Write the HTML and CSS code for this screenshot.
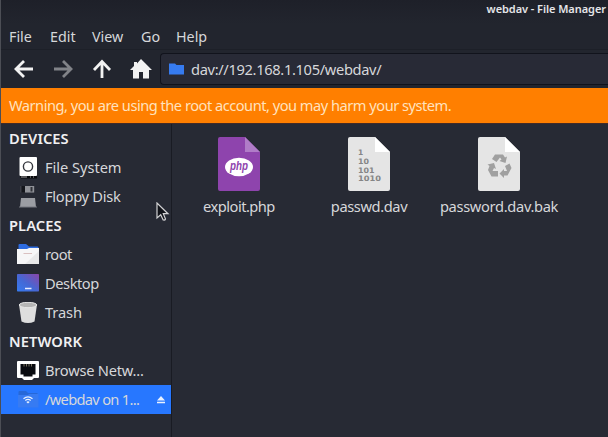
FILE: index.html
```html
<!DOCTYPE html>
<html lang="en">
<head>
<meta charset="utf-8">
<title>webdav - File Manager</title>
<link rel="stylesheet" href="styles.css">
</head>
<body>
<div class="window">
  <header class="titlebar">webdav - File Manager</header>
  <nav class="menubar"><span class="m-file">File</span><span class="m-edit">Edit</span><span class="m-view">View</span><span class="m-go">Go</span><span>Help</span></nav>
  <div class="toolbar">
    <svg class="tool" viewBox="0 0 20 20"><path class="arrow" d="M19 10H3M10 2L2 10L10 18"/></svg>
    <svg class="tool disabled" viewBox="0 0 20 20"><path class="arrow" d="M1 10H17M10 2L18 10L10 18"/></svg>
    <svg class="tool" viewBox="0 0 20 20"><path class="arrow" d="M10 19V3M2 11L10 2.5L18 11"/></svg>
    <svg class="tool home" viewBox="0 0 22 20"><path fill="#f2f2f2" d="M11 0L22 11H19V19.5H13V13H9V19.5H3V11H0L4 7V3H7V4.500Z"/></svg>
    <div class="path">
      <svg width="15" height="12" viewBox="0 0 15 12"><path fill="#367bf0" d="M0 .5H6L7.500 2H15V11.500H0Z"/></svg>
      <span class="address">dav://192.168.1.105/webdav/</span>
    </div>
  </div>
  <div class="warning"><span>Warning, you are using the root account, you may harm your system.</span></div>
  <div class="content">
    <aside class="sidebar">
      <h2 class="h-dev">DEVICES</h2>
      <div class="row"><svg viewBox="0 0 22 22"><rect x="2.500" y="0" width="17.500" height="19" rx="1" fill="#fff"/><circle cx="11" cy="9.500" r="4.600" fill="none" stroke="#35373e" stroke-width="1.400"/><path d="M3 19H20V21.500H4Z" fill="#08090c"/><path d="M4 20H10M13 20H14M16 20H17" stroke="#aaa"/></svg><span class="t-fs">File System</span></div>
      <div class="row"><svg viewBox="0 0 22 22"><path d="M3 0H18V6.500H3Z" fill="#3a3c45"/><path d="M4.500 0H8V6.500H4.500Z" fill="#14161c"/><path d="M8 0H17V6.500H8Z" fill="#909298"/><path d="M13.500 1H15.500V5.500H13.500Z" fill="#303239"/><path d="M4 12H18L19 21H3Z" fill="#9b9da3"/><path d="M2 20.500H20V21.500H2Z" fill="#777980"/></svg><span class="t-fd">Floppy Disk</span></div>
      <h2 class="h-pl">PLACES</h2>
      <div class="row"><svg viewBox="0 0 22 22"><path d="M1.500 1Q1.500 0 2.500 0H9L12 2.500H20.500Q21.500 2.500 21.500 4V8H1.500Z" fill="#2d6be0"/><path d="M0 5H10L12 4H22V20H0Z" fill="#f6f6f7"/><path d="M22 7V20H8Z" fill="#e8e8e9"/><path d="M6.500 9.500H15" stroke="#d9c0c0"/></svg><span class="t-root">root</span></div>
      <div class="row"><svg viewBox="0 0 22 22"><defs><linearGradient id="desk" x1="0" y1="1" x2="1" y2="0"><stop stop-color="#367bf0"/><stop offset=".45" stop-color="#4568d5"/><stop offset="1" stop-color="#8a46a8"/></linearGradient></defs><rect y="1" width="22" height="17.500" rx=".7" fill="url(#desk)"/><path d="M8 15.500H14.500" stroke="#e6eaff" stroke-width="1.500"/></svg><span class="t-desk">Desktop</span></div>
      <div class="row"><svg viewBox="0 0 22 22"><path d="M2 2.500L4.500 19.500Q11 22.500 17.500 19.500L20 2.500Z" fill="#dedede"/><ellipse cx="11" cy="3" rx="8.700" ry="2.700" fill="#b5b5b5" stroke="#e7e7e7"/></svg><span class="t-trash">Trash</span></div>
      <h2 class="h-net">NETWORK</h2>
      <div class="row"><svg viewBox="0 0 22 22"><path d="M1 1H21Q22 1 22 2V17Q22 18 21 18H17L15 20H7L5 18H1Q0 18 0 17V2Q0 1 1 1Z" fill="#fff"/><path d="M3.500 4H18.500V14.500H15.500V16.500H6.500V14.500H3.500Z" fill="#090b10"/><path d="M7 4V6.500M9.500 4V6.500M12 4V6.500M14.500 4V6.500" stroke="#77715f"/></svg><span class="t-browse">Browse Netw...</span></div>
      <div class="row selected"><svg viewBox="0 0 22 22"><path d="M1.500 3Q1.500 2 2.500 2H9L11 4H20.500V7H1.500Z" fill="#2668d8"/><path d="M1 6H11L12 5H21.500V18.500H1Z" fill="#377bf2"/><g fill="none" stroke="#e9f2ff" stroke-width="1.150"><path d="M6.500 9.700Q11 6 15.500 9.700M8.300 11.500Q11 9.300 13.700 11.500"/></g><path d="M9.300 13Q11 11.700 12.700 13L11 14.500Z" fill="#e9f2ff"/></svg><span class="t-webdav">/webdav on 1...</span><svg class="eject" viewBox="0 0 8 8"><path d="M4 0L8 4.500H0ZM0 5.700H8V7.300H0Z" fill="#e9f1ff"/></svg></div>
    </aside>
    <main class="files">
      <figure class="file-php">
        <svg width="44" height="55" viewBox="0 0 44 55"><path d="M2 0H28L43 15V52Q43 54 41 54H3Q1 54 1 52V2Q1 0 3 0Z" fill="#8e44ad"/><path d="M28 0L43 15H28Z" fill="#b07cc8"/><ellipse cx="22" cy="30" rx="14" ry="9.300" fill="#fff"/><text class="php" x="22" y="33" text-anchor="middle" textLength="18" lengthAdjust="spacingAndGlyphs">php</text></svg>
        <figcaption>exploit.php</figcaption>
      </figure>
      <figure class="file-dav">
        <svg width="44" height="55" viewBox="0 0 44 55"><path d="M3 0H28L43 15V52Q43 54 41 54H3Q1 54 1 52V2Q1 0 3 0Z" fill="#e5e5e5"/><path d="M28 0L43 15H28Z" fill="#fff"/><g class="bits"><text x="11" y="18">1</text><text x="11" y="26.500" textLength="11" lengthAdjust="spacingAndGlyphs">10</text><text x="11" y="35.500" textLength="16.500" lengthAdjust="spacingAndGlyphs">101</text><text x="11" y="44" textLength="23" lengthAdjust="spacingAndGlyphs">1010</text></g></svg>
        <figcaption>passwd.dav</figcaption>
      </figure>
      <figure class="file-bak">
        <svg width="44" height="55" viewBox="0 0 44 55"><path d="M3 0H28L43 15V52Q43 54 41 54H3Q1 54 1 52V2Q1 0 3 0Z" fill="#e5e5e5"/><path d="M28 0L43 15H28Z" fill="#fff"/><g fill="#a0a0a0"><path d="M15 22L18 17.500H26L28 20.500L30 19.500L28.500 26L22.500 24L24.500 22.500L23 20.500L19.500 25Z"/><path d="M10.500 27.500L17 26L19 32L17 31L15.500 34H21V39.500H14.500L11 33L12.500 29Z"/><path d="M28 29L32.500 26.500L34.500 31L30.500 38.500H27V41L22.500 36.500L27 32V34H30Z"/></g></svg>
        <figcaption>password.dav.bak</figcaption>
      </figure>
    </main>
  </div>
  <svg class="cursor" viewBox="0 0 14 20"><path d="M1 1V16L4.700 12.700L7.200 18Q9 18.500 9.500 17L7.300 11.700H12Z" fill="#111319" stroke="#d2d2d4" stroke-width="1.200"/></svg>
</div>
</body>
</html>
```
FILE: styles.css
```css
* { box-sizing: border-box; }
body { margin: 0; background: #272a34; font-family: "Noto Sans", sans-serif; }
.window { position: relative; width: 608px; height: 437px; overflow: hidden; border-left: 1px solid #4c4e55; color: #d6d7da; font-size: 14.67px; white-space: nowrap; }
.titlebar { height: 24px; padding: 0 2px 0 0; background: linear-gradient(#1e2029, #22252e); text-align: right; font-size: 11px; font-weight: 600; line-height: 18px; letter-spacing: -.06px; color: #e5e5e8; }
.menubar { display: flex; height: 26px; padding-left: 8px; background: #22252e; border-bottom: 1px solid #1d2028; line-height: 25px; font-size: 14.3px; }
.m-file { width: 41px; }
.m-edit { width: 42px; }
.m-view { width: 49px; }
.m-go { width: 35px; }
.toolbar { display: flex; height: 38px; align-items: center; padding-left: 13px; background: #22252e; }
.tool { width: 20px; height: 20px; margin-right: 19px; flex: none; }
.arrow { fill: none; stroke: #f2f2f2; stroke-width: 2.8; }
.disabled { opacity: .46; }
.home { width: 22px; height: 20px; margin: 0 8px 0 -1px; }
.path { display: flex; align-items: center; flex: 1; height: 32px; padding-left: 8px; background: #282a36; border: 1px solid #11131c; border-right: 0; border-radius: 4px 0 0 4px; }
.address { margin-left: 7px; letter-spacing: -.34px; }
.warning { height: 36px; padding-left: 8px; background: #ff7f00; border-bottom: 1px solid #432b26; line-height: 35px; letter-spacing: -.51px; color: #ffe2be; }
.content { display: flex; height: 313px; }
.sidebar { width: 170px; flex: none; background: #272a34; }
h2 { height: 29px; margin: 0; padding-left: 8px; font-size: 14.67px; line-height: 29px; font-weight: 600; color: #f0f0f2; }
.h-dev, .h-pl { letter-spacing: .08px; }
.h-net { letter-spacing: .1px; }
.row { display: flex; align-items: center; height: 29px; padding-left: 16px; line-height: 29px; }
.row svg { width: 22px; height: 22px; margin-right: 6px; flex: none; }
.t-fs { letter-spacing: -.05px; }
.t-fd { letter-spacing: -.28px; }
.t-root { letter-spacing: -.5px; }
.t-desk { letter-spacing: -.45px; }
.t-trash { letter-spacing: -.1px; }
.t-browse { letter-spacing: -.23px; }
.t-webdav { letter-spacing: -.7px; }
.selected { background: #2777ff; }
.row .eject { width: 8px; height: 8px; margin: 0 6px 0 auto; }
.files { display: flex; flex: 1; padding-top: 13px; border-left: 1px solid #191b23; }
figure { margin: 0; display: flex; flex-direction: column; align-items: center; }
figcaption { margin-top: 3px; line-height: 22px; }
.file-php { width: 134px; letter-spacing: -.52px; }
.file-dav { width: 126px; letter-spacing: -.4px; }
.file-bak { width: 134px; letter-spacing: -.33px; }
.php { font: italic 700 12px "Liberation Sans", sans-serif; letter-spacing: 0; fill: #8e44ad; }
.bits { font: 700 7.5px "DejaVu Sans", sans-serif; letter-spacing: 0; fill: #858585; }
.cursor { position: absolute; left: 155px; top: 202px; width: 14px; height: 20px; }
```
